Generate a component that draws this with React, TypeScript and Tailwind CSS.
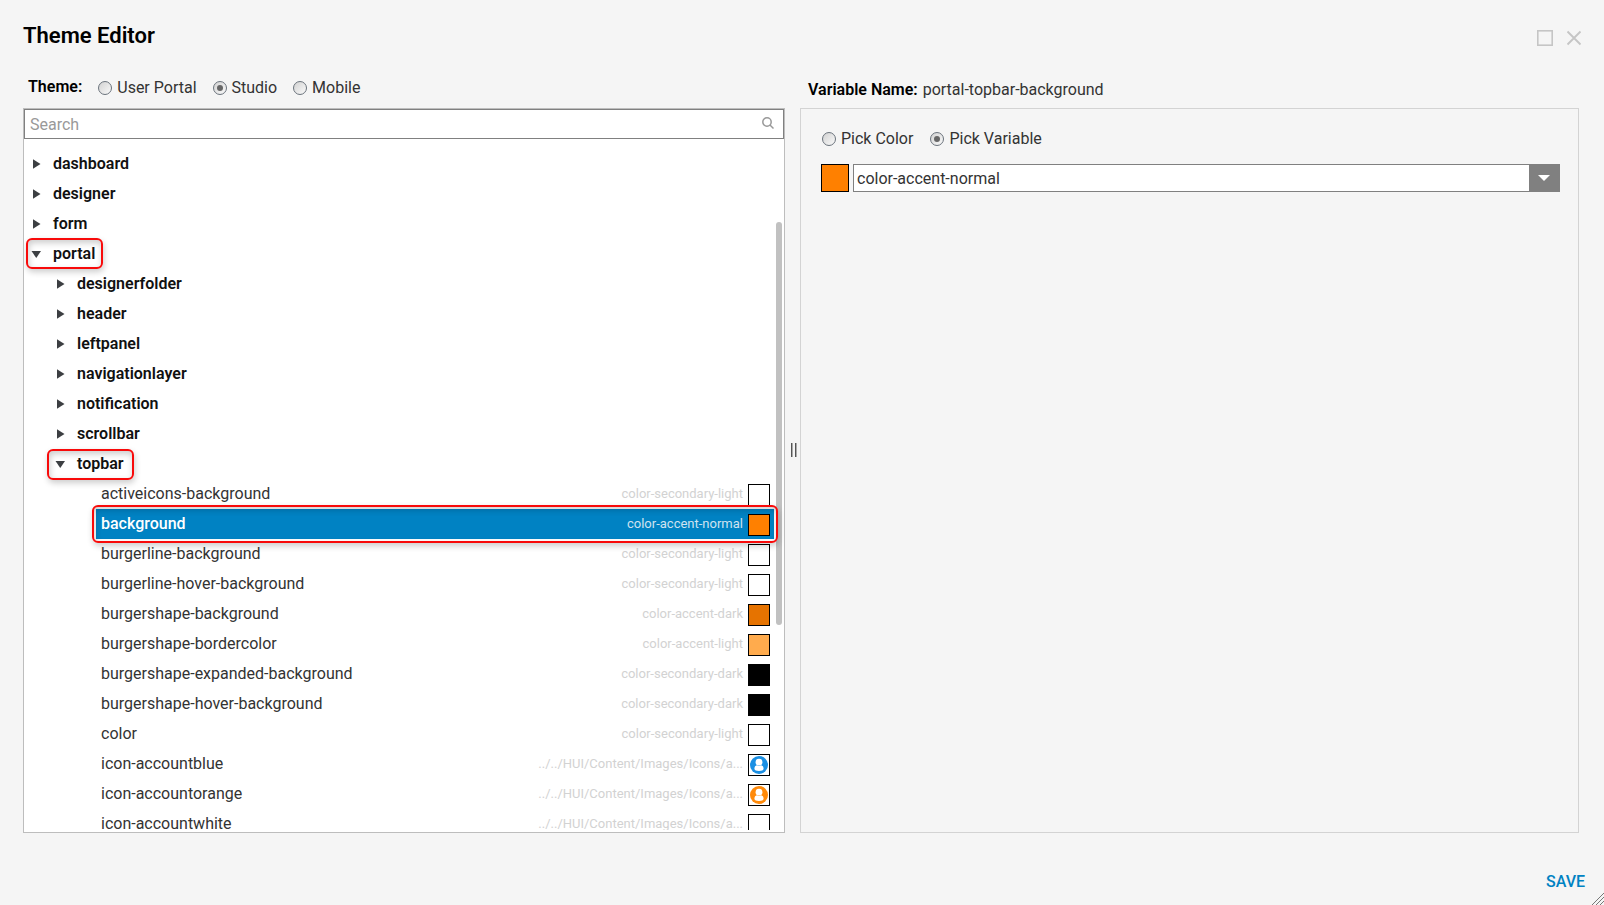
import React, { useState } from "react";

type Leaf = { name: string; value: string; swatch: string; account?: string };

const topFolders = ["dashboard", "designer", "form"];
const portalFolders = ["designerfolder", "header", "leftpanel", "navigationlayer", "notification", "scrollbar"];
const iconPath = "../../HUI/Content/Images/Icons/a...";

const leaves: Leaf[] = [
  { name: "activeicons-background", value: "color-secondary-light", swatch: "bg-white" },
  { name: "background", value: "color-accent-normal", swatch: "bg-[#ff8000]" },
  { name: "burgerline-background", value: "color-secondary-light", swatch: "bg-white" },
  { name: "burgerline-hover-background", value: "color-secondary-light", swatch: "bg-white" },
  { name: "burgershape-background", value: "color-accent-dark", swatch: "bg-[#e67300]" },
  { name: "burgershape-bordercolor", value: "color-accent-light", swatch: "bg-[#ffab4d]" },
  { name: "burgershape-expanded-background", value: "color-secondary-dark", swatch: "bg-black" },
  { name: "burgershape-hover-background", value: "color-secondary-dark", swatch: "bg-black" },
  { name: "color", value: "color-secondary-light", swatch: "bg-white" },
  { name: "icon-accountblue", value: iconPath, swatch: "bg-white", account: "#1a8fe3" },
  { name: "icon-accountorange", value: iconPath, swatch: "bg-white", account: "#ff8a0a" },
  { name: "icon-accountwhite", value: iconPath, swatch: "bg-white" },
];

function Radio({ name, label, checked, onChange }: { name: string; label: string; checked: boolean; onChange: () => void }) {
  return (
    <label className="flex items-center gap-[5px] text-base leading-5 text-[#333]">
      <span className="grid place-items-center">
        <input
          type="radio"
          name={name}
          checked={checked}
          onChange={onChange}
          className="col-start-1 row-start-1 size-3.5 appearance-none rounded-full border border-[#6b737c] bg-linear-to-br from-[#d2d2d2] to-[#fafafa]"
        />
        {checked && <span className="pointer-events-none col-start-1 row-start-1 size-1.5 rounded-full bg-[#666]" />}
      </span>
      {label}
    </label>
  );
}

function Mark({ className }: { className: string }) {
  return (
    <span
      className={`pointer-events-none absolute z-10 rounded-md border-2 border-[#f80a0a] shadow-[1px_3px_6px_rgba(0,0,0,0.2),inset_1px_3px_6px_rgba(0,0,0,0.2)] ${className}`}
    />
  );
}

function Folder({ name, open, nested, mark }: { name: string; open?: boolean; nested?: boolean; mark?: string }) {
  return (
    <li>
      <button
        type="button"
        aria-expanded={!!open}
        className={`relative flex h-[30px] items-center gap-3 text-base leading-5 font-semibold text-[#111] ${nested ? "pl-8" : "pl-2"}`}
      >
        <svg className="size-[9px] overflow-visible" viewBox="0 0 9 9" fill="#3c3f42">
          {open ? <path d="M-.5 1h9.500L4.250 8z" /> : <path d="M1 -.8v9.600l7.500-4.800z" />}
        </svg>
        {name}
        {mark && <Mark className={mark} />}
      </button>
    </li>
  );
}

function AccountIcon({ color }: { color: string }) {
  return (
    <svg className="size-[18px]" viewBox="0 0 18 18">
      <circle cx="9" cy="9" r="9" fill={color} />
      <circle cx="9" cy="6.2" r="3.4" fill="#fff" />
      <path
        d="M4.400 12.800c0-2.200 1-3.300 2.400-3.600 1.300.9 3.100.9 4.400 0 1.400.3 2.400 1.400 2.400 3.600 0 1.400-2 2.200-4.600 2.200s-4.600-.8-4.600-2.200z"
        fill="#fff"
      />
    </svg>
  );
}

function LeafRow({ leaf, selected, onSelect }: { leaf: Leaf; selected: boolean; onSelect: () => void }) {
  return (
    <li className="pl-[72px]">
      <button
        type="button"
        onClick={onSelect}
        className={`relative flex h-[30px] w-full items-center pr-1 pl-[5px] text-base leading-5 ${
          selected ? "bg-[#0082c3] font-medium text-white" : "text-[#333]"
        }`}
      >
        <span className="flex-1 text-left">{leaf.name}</span>
        <span className={`text-[13px] font-normal ${selected ? "text-[#cfe3f0]" : "text-[#d2d2d2]"}`}>{leaf.value}</span>
        <span className={`mt-0.5 ml-[5px] flex size-[22px] items-center justify-center border border-black ${leaf.swatch}`}>
          {leaf.account && <AccountIcon color={leaf.account} />}
        </span>
        {selected && <Mark className="-inset-1" />}
      </button>
    </li>
  );
}

export default function App() {
  const [theme, setTheme] = useState("Studio");
  const [mode, setMode] = useState("Pick Variable");
  const [selected, setSelected] = useState("background");

  return (
    <div className="relative flex h-screen flex-col overflow-hidden bg-[#f5f5f5] font-[Roboto,sans-serif] text-[#333]">
      <header className="flex items-start justify-between pt-[22px] pr-[22px] pl-[23px]">
        <h1 className="text-[22px] leading-7 font-semibold text-black">Theme Editor</h1>
        <div className="flex gap-[13px] pt-2">
          <button type="button" aria-label="Maximize">
            <svg className="size-4" viewBox="0 0 16 16" fill="none" stroke="#c5c5c5" strokeWidth="1.6">
              <rect x="0.8" y="0.8" width="14.4" height="14.4" />
            </svg>
          </button>
          <button type="button" aria-label="Close">
            <svg className="size-4" viewBox="0 0 16 16" fill="none" stroke="#c5c5c5" strokeWidth="1.8">
              <path d="M1.500 1.500l13 13M14.500 1.500l-13 13" />
            </svg>
          </button>
        </div>
      </header>

      <main className="flex min-h-0 flex-1 pt-6 pr-[25px] pl-[23px]">
        <section className="flex min-w-0 flex-[762] flex-col">
          <fieldset className="flex h-[34px] items-start pt-[3px] pl-[5px]">
            <span className="text-base leading-5 font-semibold text-black">Theme:</span>
            <div className="flex gap-4 pt-px pl-4">
              {["User Portal", "Studio", "Mobile"].map((t) => (
                <Radio key={t} name="theme" label={t} checked={theme === t} onChange={() => setTheme(t)} />
              ))}
            </div>
          </fieldset>
          <div className="relative flex min-h-0 flex-1 flex-col border border-[#bdbdbd] bg-white pb-0.5">
            <label className="flex h-[30px] shrink-0 items-center border border-[#808080] pr-[9px] pl-[5px]">
              <input
                type="text"
                aria-label="Search"
                placeholder="Search"
                className="min-w-0 flex-1 pt-0.5 text-base leading-5 outline-none placeholder:text-[#999]"
              />
              <svg className="mb-0.5 size-3" viewBox="0 0 12 12" fill="none" stroke="#999" strokeWidth="1.500">
                <circle cx="5" cy="5" r="4.200" />
                <path d="M8 8l3.500 3.500" />
              </svg>
            </label>
            <div className="min-h-0 flex-1 overflow-hidden pt-2.5 pr-2.5">
              <ul>
                {topFolders.map((f) => (
                  <Folder key={f} name={f} />
                ))}
                <Folder name="portal" open mark="left-0.5 -right-2 -top-px h-[31px]" />
                {portalFolders.map((f) => (
                  <Folder key={f} name={f} nested />
                ))}
                <Folder name="topbar" nested open mark="left-[23px] -right-2.5 top-0 h-[31px]" />
                {leaves.map((l) => (
                  <LeafRow key={l.name} leaf={l} selected={selected === l.name} onSelect={() => setSelected(l.name)} />
                ))}
              </ul>
            </div>
            <span className="absolute top-[113px] right-0.5 h-[403px] w-1.5 rounded-full bg-[#c1c1c1]" />
          </div>
        </section>

        <div className="flex w-[15px] cursor-col-resize items-center justify-center gap-0.5 pb-2 pl-[3px]">
          <span className="h-3.5 w-0.5 border-r border-[#aaa] bg-[#555]" />
          <span className="h-3.5 w-0.5 border-r border-[#aaa] bg-[#555]" />
        </div>

        <section className="flex min-w-0 flex-[779] flex-col">
          <p className="flex h-[34px] gap-[5px] pt-1.5 pl-2 text-base leading-5">
            <span className="font-semibold text-black">Variable Name:</span>
            <span>portal-topbar-background</span>
          </p>
          <div className="flex-1 border border-[#d3d3d3] pt-5 pr-[18px] pl-5">
            <fieldset className="flex gap-[17px] pl-px">
              {["Pick Color", "Pick Variable"].map((m) => (
                <Radio key={m} name="mode" label={m} checked={mode === m} onChange={() => setMode(m)} />
              ))}
            </fieldset>
            <div className="mt-[15px] flex gap-1">
              <span className="size-7 border border-black bg-[#ff8000]" />
              <div className="grid h-7 flex-1">
                <select
                  aria-label="Variable"
                  className="col-start-1 row-start-1 appearance-none border border-[#808080] bg-white pt-0.5 pl-[3px] text-base leading-5"
                >
                  <option>color-accent-normal</option>
                </select>
                <span className="pointer-events-none col-start-1 row-start-1 flex w-[31px] items-center justify-center justify-self-end bg-[#808080]">
                  <svg className="mr-px h-1.5 w-3" viewBox="0 0 12 6" fill="#fff">
                    <path d="M0 0h12L6 6z" />
                  </svg>
                </span>
              </div>
            </div>
          </div>
        </section>
      </main>

      <footer className="flex h-[72px] items-center justify-end pt-[26px] pr-[19px]">
        <button type="button" className="text-base leading-5 font-medium text-[#0082c3]">
          SAVE
        </button>
      </footer>
      <svg className="absolute right-0 bottom-0 size-3" viewBox="0 0 12 12" stroke="#777" fill="none">
        <path d="M0 12L12 0M4 12l8-8M8 12l4-4" />
      </svg>
    </div>
  );
}
